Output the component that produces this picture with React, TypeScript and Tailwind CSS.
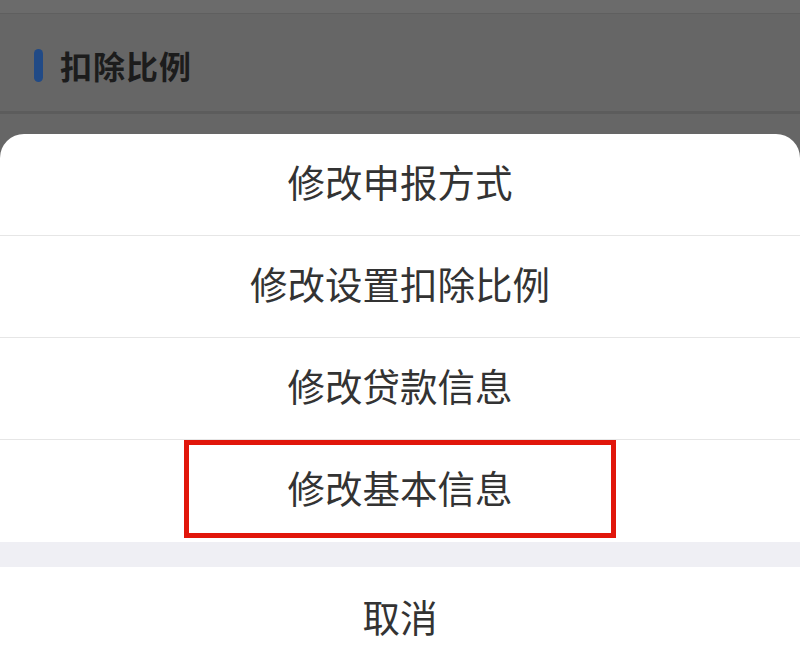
const options = ["修改申报方式", "修改设置扣除比例", "修改贷款信息", "修改基本信息"];

export default function App() {
  return (
    <div
      className="w-[800px] h-[671px] overflow-hidden bg-[#666666] flex flex-col"
      style={{ fontFamily: "'Noto Sans CJK SC', 'Noto Sans', sans-serif" }}
    >
      <div className="h-[14px] shrink-0 bg-[#6b6b6b] border-b border-[#5f5f5f]" />
      <div className="h-[100px] shrink-0 pt-[5px] flex items-center pl-[34px] border-b-[3px] border-[#5c5c5c]">
        <span className="w-[9px] h-[33px] rounded-full bg-[#214a86]" />
        <span className="ml-[17px] text-[32px] font-bold text-[#1c1c1c] tracking-[1px]">扣除比例</span>
      </div>
      <div className="h-[20px] shrink-0" />
      <div className="flex-1 bg-white rounded-t-[24px] flex flex-col">
        {options.map((label, i) => (
          <div
            key={label}
            className={
              i < options.length - 1
                ? "h-[102px] shrink-0 flex items-center justify-center border-b border-[#e6e6e6]"
                : "h-[102px] shrink-0 flex items-center justify-center relative"
            }
          >
            {i === options.length - 1 && (
              <div className="absolute left-[184px] top-0 w-[432px] h-[98px] border-[5px] border-[#e1160b]" />
            )}
            <span className="mb-[8px] text-[37.5px] text-[#333333] leading-none">{label}</span>
          </div>
        ))}
        <div className="h-[25px] shrink-0 bg-[#efeff4]" />
        <div className="flex-1 flex items-center justify-center">
          <span className="mb-[6px] text-[37.5px] text-[#333333] leading-none">取消</span>
        </div>
      </div>
    </div>
  );
}
